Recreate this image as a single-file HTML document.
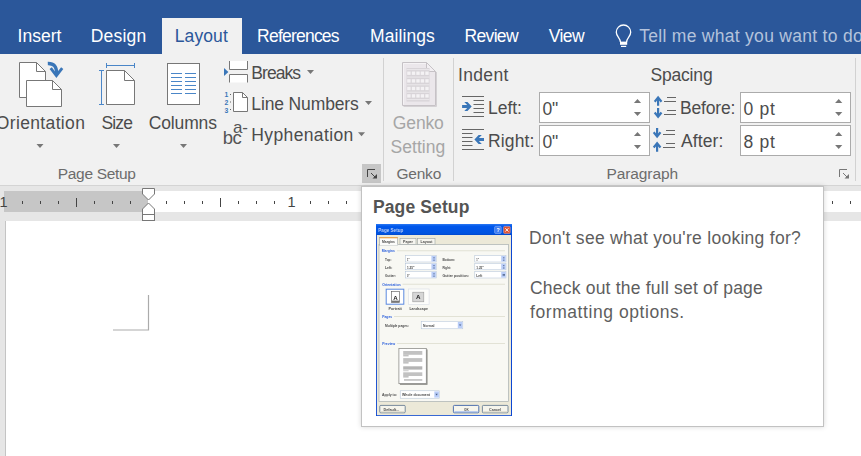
<!DOCTYPE html>
<html lang="en"><head><meta charset="utf-8"><title>Word - Layout - Page Setup</title>
<style>
html,body{margin:0;padding:0;background:#fff;}
body{font-family:"Liberation Sans",sans-serif;}
#app{position:relative;width:861px;height:456px;overflow:hidden;background:#fff;}
.t{position:absolute;white-space:pre;line-height:20px;z-index:5;}
.abs{position:absolute;}
#hdr{left:0;top:0;width:861px;height:54px;background:#2b579a;}
#tab{left:162px;top:18px;width:80px;height:36px;background:#f1f1f1;}
#ribbon{left:0;top:54px;width:861px;height:131px;background:#f1f1f1;}
#ribline{left:0;top:185px;width:861px;height:1px;background:#d4d4d4;}
#below{left:0;top:186px;width:861px;height:35px;background:#e6e6e6;}
#rulg{left:4px;top:191px;width:144px;height:21px;background:#c6c6c6;}
#rulw{left:148px;top:191px;width:713px;height:21px;background:#fff;}
#doc{left:0;top:221px;width:861px;height:235px;background:#e6e6e6;}
#page{left:5px;top:221px;width:856px;height:235px;background:#fff;border-left:1px solid #c4c4c4;box-sizing:border-box;}
.sep{width:1px;background:#d2d2d2;top:58px;height:123px;}
.inp{background:#fff;border:1px solid #ababab;box-sizing:border-box;}
#tip{left:361px;top:186px;width:463px;height:241px;background:#fff;border:1px solid #c2c2c2;box-sizing:border-box;box-shadow:0 0 5px rgba(0,0,0,.16);z-index:3;}
svg{position:absolute;left:0;top:0;z-index:4;overflow:visible;}

</style></head>
<body>
<div id="app">
<div class="abs" id="hdr"></div>
<div class="abs" id="tab"></div>
<div class="abs" id="ribbon"></div>
<div class="abs" id="ribline"></div>
<div class="abs" id="below"></div>
<div class="abs" id="rulg"></div>
<div class="abs" id="rulw"></div>
<div class="abs" id="doc"></div>
<div class="abs" id="page"></div>
<div class="abs sep" style="left:383px"></div>
<div class="abs sep" style="left:453px"></div>
<div class="abs sep" style="left:855px"></div>
<div class="abs" style="left:362px;top:164px;width:19px;height:19px;background:#c6c6c6"></div>
<div class="abs inp" style="left:539px;top:92px;width:111px;height:31px"></div>
<div class="abs inp" style="left:539px;top:125px;width:111px;height:31px"></div>
<div class="abs inp" style="left:740px;top:92px;width:111px;height:31px"></div>
<div class="abs inp" style="left:740px;top:125px;width:111px;height:31px"></div>
<div class="abs" id="tip"></div>
<svg width="861" height="456" viewBox="0 0 861 456" shape-rendering="auto">
<!-- lightbulb -->
<g fill="none" stroke="#fff" stroke-width="1.3">
<path d="M620.4,42 C620.4,38 616.3,36.6 616.3,32.2 A7.2,7.2 0 1 1 630.7,32.2 C630.7,36.6 626.6,38 626.6,42"/>
</g>
<rect x="620" y="41.6" width="7.2" height="3.2" fill="#fff"/>
<rect x="621" y="45.8" width="5.2" height="1.2" fill="#fff"/>

<!-- Orientation icon -->
<g fill="#fff" stroke="#777" stroke-width="1">
<path d="M19.5,62.5 H36.5 L45.5,71.5 V97.5 H19.5 Z"/>
<path d="M36.5,62.5 V71.5 H45.5" fill="none"/>
<path d="M26.5,80.5 H52.5 L61.5,89.5 V106.5 H26.5 Z"/>
<path d="M52.5,80.5 V89.5 H61.5" fill="none"/>
</g>
<path d="M47.8,63.5 C53.5,63.3 56.7,66 56.7,74" fill="none" stroke="#3a76b8" stroke-width="3.4"/>
<path d="M50.7,68.2 L56.4,75.6 L62.2,68.2" fill="none" stroke="#3a76b8" stroke-width="2.8" stroke-linejoin="miter"/>

<!-- Size icon -->
<g fill="#fff" stroke="#777" stroke-width="1">
<path d="M106.5,70.5 H124.5 L134.5,80.5 V104.5 H106.5 Z"/>
<path d="M124.5,70.5 V80.5 H134.5" fill="none"/>
</g>
<g fill="none" stroke="#4a86c8" stroke-width="1">
<path d="M106.5,63 V68 M134.5,63 V68 M106.5,65.5 H134.5"/>
<path d="M99,70.5 H104 M99,104.5 H104 M101.5,70.5 V104.5"/>
</g>

<!-- Columns icon -->
<rect x="167.5" y="63.5" width="32" height="41" fill="#fff" stroke="#777"/>
<g stroke="#4a86c8" stroke-width="1">
<path d="M171,73.5 H182 M171,77.5 H182 M171,81.5 H182 M171,85.5 H182 M171,89.5 H182 M171,93.5 H182"/>
<path d="M185,73.5 H196 M185,77.5 H196 M185,81.5 H196 M185,85.5 H196 M185,89.5 H196 M185,93.5 H196"/>
</g>

<!-- dropdown arrows big buttons -->
<g fill="#777">
<path d="M36.5,144 H43.5 L40,148 Z"/>
<path d="M113,144 H120 L116.5,148 Z"/>
<path d="M180,144 H187 L183.5,148 Z"/>
<path d="M307,70 H314 L310.5,74 Z"/>
<path d="M365,101 H372 L368.5,105 Z"/>
<path d="M358,132.2 H365 L361.5,136.2 Z"/>
</g>

<!-- Breaks icon -->
<path d="M224,68 L228.4,72 L224,76 Z" fill="#3a76b8"/>
<g fill="#fff" stroke="#777" stroke-width="1">
<path d="M229.5,61 V69.5 H247.5 V61"/>
<path d="M229.5,82.5 V74.5 H247.5 V82.5"/>
</g>

<!-- Line numbers icon -->
<g fill="#fff" stroke="#777" stroke-width="1">
<path d="M233.5,92.5 H242.5 L247.5,97.5 V111.5 H233.5 Z"/>
<path d="M242.5,92.5 V97.5 H247.5" fill="none"/>
</g>
<g font-family="'Liberation Sans',sans-serif" font-size="6.8" font-weight="700" fill="#3a76b8">
<text x="224.5" y="97.4">1</text><text x="224.5" y="105">2</text><text x="224.5" y="112.8">3</text>
</g>
<g fill="#666"><rect x="230" y="94" width="1" height="1"/><rect x="230" y="101.5" width="1" height="1"/><rect x="230" y="109" width="1" height="1"/></g>

<!-- Hyphenation icon -->
<g font-family="'Liberation Sans',sans-serif" fill="#555">
<text x="222.8" y="143.9" font-size="18.5" letter-spacing="-0.7">bc</text>
<text x="232.9" y="132.6" font-size="17">a-</text>
</g>

<!-- dialog launcher (page setup) -->
<g fill="none" stroke="#444" stroke-width="1">
<path d="M367.5,177 V169.5 H375"/>
<path d="M371,173 L376,178"/>
</g>
<path d="M377,174 V178.5 H372.5 Z" fill="#444"/>
<!-- dialog launcher (paragraph) -->
<g fill="none" stroke="#777" stroke-width="1">
<path d="M839.5,177 V169.5 H847"/>
<path d="M843,173 L848,178"/>
</g>
<path d="M849,174 V178.5 H844.5 Z" fill="#777"/>

<!-- Genko icon (disabled) -->
<g>
<path d="M403.5,106.5 H436.5 V72" fill="none" stroke="#d4d1d4" stroke-width="1"/>
<path d="M402.5,62.5 H426.5 L435.5,71.5 V105.5 H402.5 Z" fill="#ebe7eb" stroke="#c6c2c6"/>
<path d="M403.5,104.5 V63.5 H426" fill="none" stroke="#f5f3f5"/>
<path d="M426.5,62.5 V71.5 H435.5 Z" fill="#f2eff2" stroke="#c6c2c6"/>
<rect x="406.5" y="68" width="23" height="33.5" fill="#d8d4d8"/>
<g fill="#e9e6e9"><rect x="406.5" y="69.0" width="23" height="1.2"/><rect x="406.5" y="76.5" width="23" height="1.2"/><rect x="406.5" y="84.2" width="23" height="1.2"/><rect x="406.5" y="91.6" width="23" height="1.2"/><rect x="406.5" y="99.0" width="23" height="1.2"/></g>
<g fill="#f4f2f4"><rect x="407.2" y="71.5" width="3.4" height="3.4"/><rect x="411.8" y="71.5" width="3.4" height="3.4"/><rect x="416.3" y="71.5" width="3.4" height="3.4"/><rect x="420.7" y="71.5" width="3.4" height="3.4"/><rect x="425.3" y="71.5" width="3.4" height="3.4"/><rect x="407.2" y="79.2" width="3.4" height="3.4"/><rect x="411.8" y="79.2" width="3.4" height="3.4"/><rect x="416.3" y="79.2" width="3.4" height="3.4"/><rect x="420.7" y="79.2" width="3.4" height="3.4"/><rect x="425.3" y="79.2" width="3.4" height="3.4"/><rect x="407.2" y="86.8" width="3.4" height="3.4"/><rect x="411.8" y="86.8" width="3.4" height="3.4"/><rect x="416.3" y="86.8" width="3.4" height="3.4"/><rect x="420.7" y="86.8" width="3.4" height="3.4"/><rect x="425.3" y="86.8" width="3.4" height="3.4"/><rect x="407.2" y="94.2" width="3.4" height="3.4"/><rect x="411.8" y="94.2" width="3.4" height="3.4"/><rect x="416.3" y="94.2" width="3.4" height="3.4"/><rect x="420.7" y="94.2" width="3.4" height="3.4"/><rect x="425.3" y="94.2" width="3.4" height="3.4"/></g>
</g>

<!-- Indent left icon -->
<g stroke="#666" stroke-width="1" fill="none">
<path d="M462,96.5 H484 M473.5,100.5 H484 M473.5,104.5 H484 M473.5,108.5 H484 M473.5,112.5 H484 M462,116.5 H484"/>
<path d="M462,129.5 H484 M462,133.5 H472.5 M462,137.5 H472.5 M462,141.5 H472.5 M462,145.5 H472.5 M462,149.5 H484"/>
</g>
<g fill="#3a76b8">
<path d="M464.3,102.0 L467.5,102.0 L471.7,106.5 L467.5,111.0 L464.3,111.0 L467.2,108.0 L462.1,108.0 L462.1,105.0 L467.2,105.0 Z"/>
<path d="M481.8,135.0 L478.6,135.0 L474.4,139.5 L478.6,144.0 L481.8,144.0 L478.9,141.0 L484.0,141.0 L484.0,138.0 L478.9,138.0 Z"/>
</g>

<!-- Spacing before icon -->
<g stroke="#666" stroke-width="1" fill="none">
<path d="M667,97.5 H676 M664,101.5 H676 M667,110.5 H676 M664,114.5 H676"/>
<path d="M666,130.5 H675 M663,134.5 H675 M666,143.5 H675 M663,147.5 H675"/>
</g>
<g stroke="#3a76b8" stroke-width="2.2" fill="none" stroke-linecap="butt" stroke-linejoin="miter">
<path d="M658.1,96.9 V105.7 M654.7,101.7 L658.1,97.4 L661.5,101.7"/>
<path d="M658.1,108.0 V117.3 M654.7,112.5 L658.1,116.8 L661.5,112.5"/>
<path d="M657.1,128.1 V137.1 M653.7,132.3 L657.1,136.6 L660.5,132.3"/>
<path d="M657.1,142.7 V151.8 M653.7,147.5 L657.1,143.2 L660.5,147.5"/>
</g>

<!-- spinners -->
<g fill="#777">
<path d="M633.9,103 H641.1 L637.5,99 Z"/><path d="M633.9,112 H641.1 L637.5,116 Z"/>
<path d="M633.9,136 H641.1 L637.5,132 Z"/><path d="M633.9,145 H641.1 L637.5,149 Z"/>
<path d="M835.1,103 H842.3000000000001 L838.7,99 Z"/><path d="M835.1,112 H842.3000000000001 L838.7,116 Z"/>
<path d="M835.1,136 H842.3000000000001 L838.7,132 Z"/><path d="M835.1,145 H842.3000000000001 L838.7,149 Z"/>
</g>

<!-- ruler ticks -->
<g fill="#444" id="ticks">
<rect x="22.0" y="201" width="1" height="3"/>
<rect x="40.0" y="201" width="1" height="3"/>
<rect x="58.0" y="201" width="1" height="3"/>
<rect x="76.0" y="198" width="1" height="9"/>
<rect x="94.0" y="201" width="1" height="3"/>
<rect x="112.0" y="201" width="1" height="3"/>
<rect x="130.0" y="201" width="1" height="3"/>
<rect x="166.0" y="201" width="1" height="3"/>
<rect x="184.0" y="201" width="1" height="3"/>
<rect x="202.0" y="201" width="1" height="3"/>
<rect x="220.0" y="198" width="1" height="9"/>
<rect x="238.0" y="201" width="1" height="3"/>
<rect x="256.0" y="201" width="1" height="3"/>
<rect x="274.0" y="201" width="1" height="3"/>
<rect x="310.0" y="201" width="1" height="3"/>
<rect x="328.0" y="201" width="1" height="3"/>
<rect x="346.0" y="201" width="1" height="3"/>
<rect x="832.0" y="201" width="1" height="3"/>
<rect x="850.0" y="201" width="1" height="3"/>
</g>
<!-- ruler numbers -->
<g font-family="'Liberation Sans',sans-serif" font-size="14.5" fill="#444" text-anchor="middle">
<text x="3.6" y="207">1</text><text x="291.6" y="207">1</text>
</g>
<!-- indent markers -->
<g fill="#fff" stroke="#777" stroke-width="1">
<path d="M142.5,188.5 H154.5 V194 L148.5,200 L142.5,194 Z"/>
<path d="M142.5,214.5 V209 L148.5,203 L154.5,209 V214.5 Z"/>
<rect x="142.5" y="214.5" width="12" height="6"/>
</g>
<!-- page corner mark -->
<path d="M113,330 H148.5 V295" fill="none" stroke="#ababab" stroke-width="1.2"/>
</svg>
<svg width="861" height="456" viewBox="0 0 861 456" style="z-index:6">
<defs>
<linearGradient id="tb" x1="0" y1="0" x2="0" y2="1"><stop offset="0" stop-color="#2a78f2"/><stop offset="0.2" stop-color="#0558ec"/><stop offset="0.85" stop-color="#0253e0"/><stop offset="1" stop-color="#0848cc"/></linearGradient>
<filter id="bl" x="-2%" y="-2%" width="104%" height="104%"><feGaussianBlur stdDeviation="0.45"/></filter>
</defs>
<g filter="url(#bl)" font-family="'Liberation Sans',sans-serif">
<!-- dialog frame -->
<rect x="376" y="224" width="136" height="192" fill="#0a47d2"/>
<rect x="376" y="224" width="136" height="11" fill="url(#tb)"/>
<rect x="376.9" y="235" width="134.1" height="180.2" fill="#ece9d8"/>
<text x="378.3" y="231.8" font-size="4.6" font-weight="700" fill="#b4cbf6" textLength="25" lengthAdjust="spacingAndGlyphs">Page Setup</text>
<!-- title buttons -->
<rect x="494.6" y="226.4" width="6.6" height="7" rx="1" fill="#3b7cf3" stroke="#a9c4f8" stroke-width="0.5"/>
<text x="496.4" y="232.2" font-size="5.5" font-weight="700" fill="#fff">?</text>
<rect x="503.6" y="226.4" width="6.6" height="7" rx="1" fill="#de5232" stroke="#eeb0a0" stroke-width="0.5"/>
<path d="M505.3,228.2 L508.5,231.6 M508.5,228.2 L505.3,231.6" stroke="#fff" stroke-width="0.9"/>
<!-- tab panel -->
<rect x="379" y="244.5" width="129.5" height="157" fill="#f8f8f3" stroke="#a9b0b0" stroke-width="0.7"/>
<!-- tabs -->
<rect x="400" y="238.6" width="16" height="6" fill="#f6f5ef" stroke="#9aa3a4" stroke-width="0.6"/>
<rect x="417.6" y="238.6" width="17.4" height="6" fill="#f6f5ef" stroke="#9aa3a4" stroke-width="0.6"/>
<rect x="379.6" y="237.6" width="18" height="7.6" fill="#fcfcfa" stroke="#9aa3a4" stroke-width="0.6"/>
<rect x="379.6" y="237.2" width="18" height="1.1" fill="#f0a03c"/>
<rect x="380" y="244" width="17.3" height="1.4" fill="#fcfcfa"/>
<g font-size="4.3" font-weight="700" fill="#4a4a4a">
<text x="382" y="243.3" textLength="13" lengthAdjust="spacingAndGlyphs">Margins</text>
<text x="403" y="243.3" textLength="10" lengthAdjust="spacingAndGlyphs">Paper</text>
<text x="420.5" y="243.3" textLength="12" lengthAdjust="spacingAndGlyphs">Layout</text>
</g>
<!-- group labels -->
<g font-size="4.3" font-weight="700" fill="#2c60dc">
<text x="381.8" y="252.1" textLength="13" lengthAdjust="spacingAndGlyphs">Margins</text>
<text x="382.2" y="285.5" textLength="18.5" lengthAdjust="spacingAndGlyphs">Orientation</text>
<text x="382.2" y="318.1" textLength="10" lengthAdjust="spacingAndGlyphs">Pages</text>
<text x="382.2" y="344.9" textLength="13" lengthAdjust="spacingAndGlyphs">Preview</text>
</g>
<g fill="#dcdccd">
<rect x="397" y="250.4" width="108" height="0.8"/>
<rect x="402.5" y="283.8" width="102.5" height="0.8"/>
<rect x="394" y="316" width="111" height="0.8"/>
<rect x="397" y="343" width="108" height="0.8"/>
</g>
<!-- margin fields -->
<g fill="#fff" stroke="#aebfd6" stroke-width="0.5">
<rect x="405.5" y="255.6" width="30.7" height="6.4"/><rect x="405.5" y="263.4" width="30.7" height="6.4"/><rect x="405.5" y="271.6" width="30.7" height="6.4"/>
<rect x="474.8" y="255.6" width="31.2" height="6.4"/><rect x="474.8" y="263.4" width="31.2" height="6.4"/><rect x="474.8" y="271.6" width="31.2" height="6.4"/>
</g>
<g fill="#b9cdf8">
<rect x="431.4" y="256" width="4.5" height="5.6"/><rect x="431.4" y="263.8" width="4.5" height="5.6"/><rect x="431.4" y="272" width="4.5" height="5.6"/>
<rect x="501.2" y="256" width="4.5" height="5.6"/><rect x="501.2" y="263.8" width="4.5" height="5.6"/><rect x="501.2" y="272" width="4.5" height="5.6"/>
</g>
<g fill="#4d6185">
<rect x="433.5" y="257.2" width="1" height="1.2"/><rect x="433.5" y="259.6" width="1" height="1.2"/>
<rect x="433.5" y="265" width="1" height="1.2"/><rect x="433.5" y="267.4" width="1" height="1.2"/>
<rect x="433.5" y="273.2" width="1" height="1.2"/><rect x="433.5" y="275.6" width="1" height="1.2"/>
<rect x="503.3" y="257.2" width="1" height="1.2"/><rect x="503.3" y="259.6" width="1" height="1.2"/>
<rect x="503.3" y="265" width="1" height="1.2"/><rect x="503.3" y="267.4" width="1" height="1.2"/>
<rect x="502.6" y="274.2" width="2.4" height="1.4"/>
</g>
<g font-size="4.3" font-weight="700" fill="#4a4a4a">
<text x="385" y="261" textLength="6.5" lengthAdjust="spacingAndGlyphs">Top:</text>
<text x="385" y="268.8" textLength="7.5" lengthAdjust="spacingAndGlyphs">Left:</text>
<text x="385" y="277" textLength="11" lengthAdjust="spacingAndGlyphs">Gutter:</text>
<text x="442.4" y="261" textLength="12.5" lengthAdjust="spacingAndGlyphs">Bottom:</text>
<text x="442.4" y="268.8" textLength="8.5" lengthAdjust="spacingAndGlyphs">Right:</text>
<text x="442.4" y="277" textLength="26.5" lengthAdjust="spacingAndGlyphs">Gutter position:</text>
<text x="407" y="260.8" textLength="2.6" lengthAdjust="spacingAndGlyphs">1"</text>
<text x="407" y="268.6" textLength="7.5" lengthAdjust="spacingAndGlyphs">1.25"</text>
<text x="407" y="276.8" textLength="2.6" lengthAdjust="spacingAndGlyphs">0"</text>
<text x="476.3" y="260.8" textLength="2.6" lengthAdjust="spacingAndGlyphs">1"</text>
<text x="476.3" y="268.6" textLength="7.5" lengthAdjust="spacingAndGlyphs">1.25"</text>
<text x="476.3" y="276.8" textLength="6" lengthAdjust="spacingAndGlyphs">Left</text>
</g>
<!-- orientation buttons -->
<rect x="386.2" y="289.2" width="17.6" height="15" fill="#fff" stroke="#5b89e0" stroke-width="1"/>
<rect x="408.5" y="289" width="20.6" height="15.4" fill="#fdfdfb" stroke="#dde1e8" stroke-width="0.7"/>
<rect x="391.6" y="291.4" width="7.8" height="11" fill="#fff" stroke="#555" stroke-width="0.6"/><rect x="391.6" y="300.6" width="7.8" height="1.8" fill="#777"/>
<rect x="412.8" y="292.2" width="11" height="9.6" fill="#d6d6d6" stroke="#999" stroke-width="0.6"/>
<g font-size="6.2" font-weight="700" fill="#222">
<text x="393.3" y="299.6">A</text><text x="416.1" y="299.4">A</text>
</g>
<g font-size="4.2" font-weight="700" fill="#4a4a4a">
<text x="388.4" y="310" textLength="13.5" lengthAdjust="spacingAndGlyphs">Portrait</text>
<text x="409.4" y="310" textLength="18.5" lengthAdjust="spacingAndGlyphs">Landscape</text>
<text x="385" y="326.8" textLength="24" lengthAdjust="spacingAndGlyphs">Multiple pages:</text>
<text x="382" y="396.2" textLength="15" lengthAdjust="spacingAndGlyphs">Apply to:</text>
</g>
<!-- multiple pages combo -->
<rect x="421.2" y="321.4" width="41.6" height="7.4" fill="#fff" stroke="#aebfd6" stroke-width="0.5"/>
<rect x="457.8" y="322" width="4.6" height="6.2" fill="#b9cdf8"/>
<path d="M458.9,324.4 H461.3 L460.1,326 Z" fill="#4d6185"/>
<text x="423" y="326.8" font-size="4.2" font-weight="700" fill="#4a4a4a" textLength="11.5" lengthAdjust="spacingAndGlyphs">Normal</text>
<!-- preview page -->
<rect x="399.9" y="349.4" width="27.6" height="35.4" fill="#84847f"/>
<rect x="398.9" y="348.4" width="27.4" height="35.2" fill="#fff" stroke="#8e8e8a" stroke-width="0.8"/>
<g fill="#c2c2c2">
<rect x="403.2" y="351" width="19.1" height="3.8"/><rect x="403.2" y="354.6" width="5.4" height="1.8"/>
<rect x="403.2" y="358.1" width="19.1" height="3.8"/><rect x="403.2" y="361.7" width="5.4" height="1.9"/>
<rect x="403.2" y="366.3" width="19.1" height="3.3" fill="#b4b4b4"/><rect x="403.2" y="369.4" width="5.4" height="1.9" fill="#d4d4d4"/>
<rect x="403.2" y="372.3" width="19.1" height="3.7"/><rect x="403.2" y="375.8" width="5.4" height="1.8"/>
<rect x="404" y="379.1" width="18.3" height="1.7"/>
</g>
<!-- apply to combo -->
<rect x="400.2" y="390.8" width="39" height="7.4" fill="#fff" stroke="#aebfd6" stroke-width="0.5"/>
<rect x="434.3" y="391.4" width="4.6" height="6.2" fill="#b9cdf8"/>
<path d="M435.4,393.8 H437.8 L436.6,395.4 Z" fill="#4d6185"/>
<text x="402" y="396.2" font-size="4.2" font-weight="700" fill="#4a4a4a" textLength="28" lengthAdjust="spacingAndGlyphs">Whole document</text>
<!-- buttons -->
<g fill="#f6f5ec" stroke="#44607f" stroke-width="0.7">
<rect x="379.8" y="405.4" width="25.4" height="7.4" rx="1"/>
<rect x="482.4" y="405.4" width="25.6" height="7.4" rx="1"/>
</g>
<rect x="453.4" y="405.4" width="25.4" height="7.4" rx="1" fill="#f6f5ec" stroke="#3c62a8" stroke-width="0.9"/>
<rect x="454.4" y="411.2" width="23.4" height="1.2" fill="#a9c0ec"/>
<rect x="380.6" y="411.4" width="23.8" height="1" fill="#d8d4c2"/>
<rect x="483.2" y="411.4" width="24" height="1" fill="#d8d4c2"/>
<g font-size="4.2" font-weight="700" fill="#4a4a4a">
<text x="383.4" y="410.8" textLength="16" lengthAdjust="spacingAndGlyphs">Default...</text>
<text x="464" y="410.8" textLength="4.6" lengthAdjust="spacingAndGlyphs">OK</text>
<text x="489" y="410.8" textLength="12" lengthAdjust="spacingAndGlyphs">Cancel</text>
</g>
</g>
</svg>

<!-- text labels -->
<span class="t" style="left:17.60px;top:25.94px;font-size:17.5px;letter-spacing:-0.00px;color:#fff;">Insert</span>
<span class="t" style="left:90.80px;top:25.94px;font-size:17.5px;letter-spacing:0.19px;color:#fff;">Design</span>
<span class="t" style="left:174.70px;top:25.94px;font-size:17.5px;letter-spacing:0.12px;color:#2b579a;">Layout</span>
<span class="t" style="left:257.10px;top:25.94px;font-size:17.5px;letter-spacing:-0.78px;color:#fff;">References</span>
<span class="t" style="left:370.00px;top:25.94px;font-size:17.5px;letter-spacing:0.09px;color:#fff;">Mailings</span>
<span class="t" style="left:464.60px;top:25.94px;font-size:17.5px;letter-spacing:-0.69px;color:#fff;">Review</span>
<span class="t" style="left:548.70px;top:25.94px;font-size:17.5px;letter-spacing:-0.56px;color:#fff;">View</span>
<span class="t" style="left:639.20px;top:25.94px;font-size:17.5px;letter-spacing:0.29px;color:#b4c3dc;">Tell me what you want to do</span>
<span class="t" style="left:-4.20px;top:112.94px;font-size:17.5px;letter-spacing:0.35px;color:#4c4c4c;">Orientation</span>
<span class="t" style="left:101.60px;top:112.94px;font-size:17.5px;letter-spacing:-0.90px;color:#4c4c4c;">Size</span>
<span class="t" style="left:148.70px;top:112.94px;font-size:17.5px;letter-spacing:-0.13px;color:#4c4c4c;">Columns</span>
<span class="t" style="left:392.80px;top:112.94px;font-size:17.5px;letter-spacing:-0.13px;color:#a6a6a6;">Genko</span>
<span class="t" style="left:390.50px;top:136.94px;font-size:17.5px;letter-spacing:0.06px;color:#a6a6a6;">Setting</span>
<span class="t" style="left:251.30px;top:62.94px;font-size:17.5px;letter-spacing:-0.96px;color:#4c4c4c;">Breaks</span>
<span class="t" style="left:251.30px;top:93.94px;font-size:17.5px;letter-spacing:-0.13px;color:#4c4c4c;">Line Numbers</span>
<span class="t" style="left:251.30px;top:124.94px;font-size:17.5px;letter-spacing:0.37px;color:#4c4c4c;">Hyphenation</span>
<span class="t" style="left:57.80px;top:163.63px;font-size:15.5px;letter-spacing:-0.33px;color:#6c6c6c;">Page Setup</span>
<span class="t" style="left:396.40px;top:163.63px;font-size:15.5px;letter-spacing:-0.19px;color:#6c6c6c;">Genko</span>
<span class="t" style="left:606.50px;top:163.63px;font-size:15.5px;letter-spacing:-0.10px;color:#6c6c6c;">Paragraph</span>
<span class="t" style="left:457.90px;top:64.94px;font-size:17.5px;letter-spacing:0.38px;color:#4c4c4c;">Indent</span>
<span class="t" style="left:650.40px;top:64.94px;font-size:17.5px;letter-spacing:-0.17px;color:#4c4c4c;">Spacing</span>
<span class="t" style="left:488.10px;top:97.94px;font-size:17.5px;letter-spacing:-0.05px;color:#4c4c4c;">Left:</span>
<span class="t" style="left:488.10px;top:130.94px;font-size:17.5px;letter-spacing:0.11px;color:#4c4c4c;">Right:</span>
<span class="t" style="left:680.00px;top:97.94px;font-size:17.5px;letter-spacing:-0.19px;color:#4c4c4c;">Before:</span>
<span class="t" style="left:681.00px;top:130.94px;font-size:17.5px;letter-spacing:0.11px;color:#4c4c4c;">After:</span>
<span class="t" style="left:542.40px;top:98.94px;font-size:17.5px;letter-spacing:-0.03px;color:#4c4c4c;">0&quot;</span>
<span class="t" style="left:542.40px;top:131.94px;font-size:17.5px;letter-spacing:-0.03px;color:#4c4c4c;">0&quot;</span>
<span class="t" style="left:743.50px;top:98.94px;font-size:17.5px;letter-spacing:0.69px;color:#4c4c4c;">0 pt</span>
<span class="t" style="left:743.50px;top:131.94px;font-size:17.5px;letter-spacing:0.69px;color:#4c4c4c;">8 pt</span>
<span class="t" style="left:372.90px;top:196.94px;font-size:17.5px;letter-spacing:0.13px;color:#545454;font-weight:700;">Page Setup</span>
<span class="t" style="left:529.00px;top:227.94px;font-size:17.5px;letter-spacing:0.28px;color:#5e5e5e;">Don't see what you're looking for?</span>
<span class="t" style="left:530.00px;top:277.94px;font-size:17.5px;letter-spacing:0.21px;color:#5e5e5e;">Check out the full set of page</span>
<span class="t" style="left:530.00px;top:301.94px;font-size:17.5px;letter-spacing:0.57px;color:#5e5e5e;">formatting options.</span>
</div>
</body></html>
